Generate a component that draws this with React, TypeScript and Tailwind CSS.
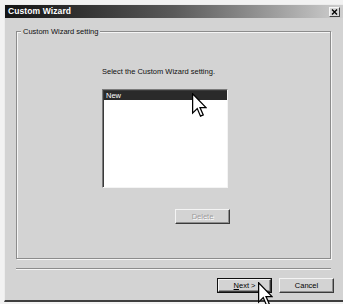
import React from "react";

const font = { fontFamily: '"Liberation Sans", Arial, sans-serif' };

function Arrow() {
  return (
    <svg width="15" height="24" viewBox="0 0 12 19" className="block">
      <path
        d="M0.5 0.5 L0.5 16 L4.2 12.4 L6.8 18.4 L9 17.4 L6.4 11.6 L11.2 11.6 Z"
        fill="#fff"
        stroke="#000"
        strokeWidth="1"
        strokeLinejoin="miter"
      />
    </svg>
  );
}

function Button({ children, def, disabled }: { children: React.ReactNode; def?: boolean; disabled?: boolean }) {
  return (
    <div
      className={
        "w-[55px] h-[15px] flex items-center justify-center text-[7.5px] leading-none " +
        (def ? "border border-[#111] " : "") +
        (disabled ? "text-[#9c9c9c] [text-shadow:1px_1px_0_#fff] " : "text-black ")
      }
    >
      <div className="w-full h-full flex items-center justify-center border-t border-l border-[#f4f4f4] border-r border-b border-r-[#3a3a3a] border-b-[#3a3a3a] shadow-[inset_-1px_-1px_0_#8e8e8e]">
        {children}
      </div>
    </div>
  );
}

export default function App() {
  return (
    <div className="w-[343px] h-[304px] bg-[#f2f2f2] overflow-hidden relative" style={font}>
      <div className="ml-[4px] mt-[4px] w-[339px] h-[298px] bg-[#d3d3d3] border-l border-t border-[#ececec] border-b-2 border-b-[#3e3e3e] flex flex-col">
        {/* title bar */}
        <div className="h-[13px] flex items-center pl-[3px] pr-[3px] bg-gradient-to-r from-[#141414] via-[#5a5a5a] to-[#cfcfcf]">
          <span className="text-white font-bold text-[8.5px] leading-none tracking-[0.1px]">Custom Wizard</span>
          <div className="ml-auto w-[11px] h-[10px] bg-[#d6d6d6] border-t border-l border-[#f6f6f6] border-r border-b border-r-[#404040] border-b-[#404040] flex items-center justify-center">
            <svg width="7" height="6" viewBox="0 0 7 6">
              <path d="M1 0.5 L6 5.5 M6 0.5 L1 5.5" stroke="#000" strokeWidth="1.4" />
            </svg>
          </div>
        </div>

        {/* body */}
        <div className="flex flex-col pl-[11px] pt-[13px]">
          <div className="relative w-[315px] h-[228px] border border-[#8c8c8c] shadow-[inset_1px_1px_0_#f5f5f5,1px_1px_0_#f5f5f5]">
            <span className="absolute -top-[5px] left-[4px] px-[2px] bg-[#d3d3d3] text-[7.5px] leading-[9px] text-[#111]">
              Custom Wizard setting
            </span>
            <div className="flex flex-col pl-[85px] pt-[35px]">
              <div className="h-[10px] leading-[10px] text-[7.5px] text-[#111]">Select the Custom Wizard setting.</div>
              <div className="mt-[12px] w-[126px] h-[99px] bg-white border-t border-l border-[#7a7a7a] border-r border-b border-r-[#f4f4f4] border-b-[#f4f4f4] shadow-[inset_1px_1px_0_#3a3a3a]">
                <div className="ml-px mt-px h-[9px] bg-[#2a2a2a] text-white text-[7.5px] leading-[9px] pl-[2px]">New</div>
              </div>
              <div className="mt-[21px] ml-[73px]">
                <Button disabled>Delete</Button>
              </div>
            </div>
          </div>

          <div className="mt-[9px] w-[315px] h-[2px] border-t border-[#8c8c8c] border-b border-b-[#f5f5f5]" />

          <div className="mt-[8px] ml-[201px] flex gap-[7px]">
            <Button def>
              <span>
                <u>N</u>ext &gt;
              </span>
            </Button>
            <Button>Cancel</Button>
          </div>
        </div>
      </div>

      {/* mouse pointers */}
      <div className="absolute left-[192px] top-[93px]">
        <Arrow />
      </div>
      <div className="absolute left-[258px] top-[282px]">
        <Arrow />
      </div>
    </div>
  );
}
